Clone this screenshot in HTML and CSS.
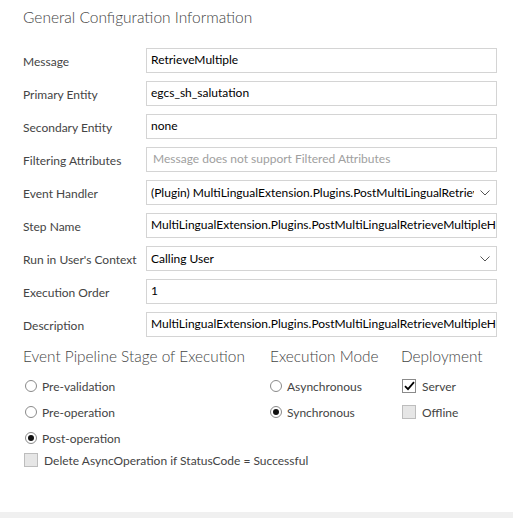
FILE: index.html
```html
<!DOCTYPE html>
<html>
<head>
<meta charset="utf-8">
<link rel="stylesheet" href="styles.css">
</head>
<body>
<div class="page">
  <h1 class="title">General Configuration Information</h1>
  <div class="form">
    <div class="label">Message</div>
    <div class="field">RetrieveMultiple</div>
    <div class="label">Primary Entity</div>
    <div class="field">egcs_sh_salutation</div>
    <div class="label">Secondary Entity</div>
    <div class="field">none</div>
    <div class="label">Filtering Attributes</div>
    <div class="field disabled">Message does not support Filtered Attributes</div>
    <div class="label">Event Handler</div>
    <div class="field select"><span class="val">(Plugin) MultiLingualExtension.Plugins.PostMultiLingualRetrieveMultipleHelper</span><svg class="chev" width="10" height="6" viewBox="0 0 10 6"><path d="M0.5 0.5 L5 5 L9.5 0.5" fill="none" stroke="#555" stroke-width="1"/></svg></div>
    <div class="label">Step Name</div>
    <div class="field">MultiLingualExtension.Plugins.PostMultiLingualRetrieveMultipleHelper</div>
    <div class="label">Run in User's Context</div>
    <div class="field select"><span class="val">Calling User</span><svg class="chev" width="10" height="6" viewBox="0 0 10 6"><path d="M0.5 0.5 L5 5 L9.5 0.5" fill="none" stroke="#555" stroke-width="1"/></svg></div>
    <div class="label">Execution Order</div>
    <div class="field">1</div>
    <div class="label">Description</div>
    <div class="field">MultiLingualExtension.Plugins.PostMultiLingualRetrieveMultipleHelper</div>
  </div>
  <div class="options">
    <div class="col pipeline">
      <h2 class="head">Event Pipeline Stage of Execution</h2>
      <div class="opt"><span class="radio"></span>Pre-validation</div>
      <div class="opt"><span class="radio"></span>Pre-operation</div>
      <div class="opt"><span class="radio on"></span>Post-operation</div>
    </div>
    <div class="col">
      <h2 class="head">Execution Mode</h2>
      <div class="opt"><span class="radio"></span>Asynchronous</div>
      <div class="opt"><span class="radio on"></span>Synchronous</div>
    </div>
    <div class="col">
      <h2 class="head">Deployment</h2>
      <div class="opt"><span class="check on"><svg width="11" height="10" viewBox="0 0 11 10"><path d="M1 5.2 L4 8.2 L10 1.2" fill="none" stroke="#000" stroke-width="1.8"/></svg></span>Server</div>
      <div class="opt"><span class="check"></span>Offline</div>
    </div>
  </div>
  <div class="opt delete"><span class="check"></span>Delete AsyncOperation if StatusCode = Successful</div>
</div>
<div class="footer"></div>
</body>
</html>
```

FILE: styles.css
```css
html, body {
  margin: 0;
  padding: 0;
  background: #fff;
}
body {
  width: 513px;
  height: 518px;
  overflow: hidden;
  font-family: "Lato", "Open Sans", sans-serif;
  color: #444;
  display: flex;
  flex-direction: column;
}
.page {
  padding: 0 0 0 23px;
  height: 512px;
  box-sizing: border-box;
}
.title {
  margin: 0;
  padding-top: 7px;
  height: 48px;
  box-sizing: border-box;
  font-size: 15.5px;
  font-weight: 300;
  color: #444;
  line-height: 20px;
  white-space: nowrap;
}
.form {
  display: grid;
  grid-template-columns: 123px 351px;
  grid-auto-rows: 25px;
  row-gap: 8px;
}
.label {
  font-size: 12px;
  line-height: 25px;
  padding-top: 1px;
  color: #444;
  white-space: nowrap;
}
.field {
  border: 1px solid #d4d4d4;
  box-sizing: border-box;
  height: 25px;
  font-size: 12px;
  line-height: 21px;
  padding: 0 0 0 4px;
  color: #000;
  white-space: nowrap;
  overflow: hidden;
}
.field.disabled {
  color: #a0a0a0;
  padding-left: 6px;
}
.field.select {
  display: flex;
  align-items: center;
  padding-right: 6px;
}
.field.select .val {
  flex: 1;
  overflow: hidden;
  line-height: 21px;
}
.chev {
  flex: none;
  margin-left: 6px;
}
.options {
  display: grid;
  grid-template-columns: 247px 131px 1fr;
  margin-top: 8px;
}
.head {
  margin: 0 0 6px 0;
  font-size: 15.4px;
  font-weight: 300;
  line-height: 22px;
  color: #444;
  white-space: nowrap;
}
.opt {
  display: flex;
  align-items: center;
  height: 26px;
  font-size: 12px;
  color: #444;
  white-space: nowrap;
}
.radio {
  width: 12px;
  height: 12px;
  border: 1px solid #8a8a8a;
  border-radius: 50%;
  box-sizing: border-box;
  margin: 0 5px 0 0;
  display: flex;
  align-items: center;
  justify-content: center;
  background: #fff;
}
.pipeline .radio {
  margin-left: 2px;
}
.radio.on::after {
  content: "";
  width: 6px;
  height: 6px;
  border-radius: 50%;
  background: #111;
}
.check {
  width: 14px;
  height: 14px;
  border: 1px solid #bdbdbd;
  background: #e6e6e6;
  box-sizing: border-box;
  margin: 0 6px 0 1px;
  display: flex;
  align-items: center;
  justify-content: center;
}
.check.on {
  background: #fff;
  border-color: #8a8a8a;
}
.delete {
  height: 18px;
}
.footer {
  height: 6px;
  background: #f0f0f0;
}
```
